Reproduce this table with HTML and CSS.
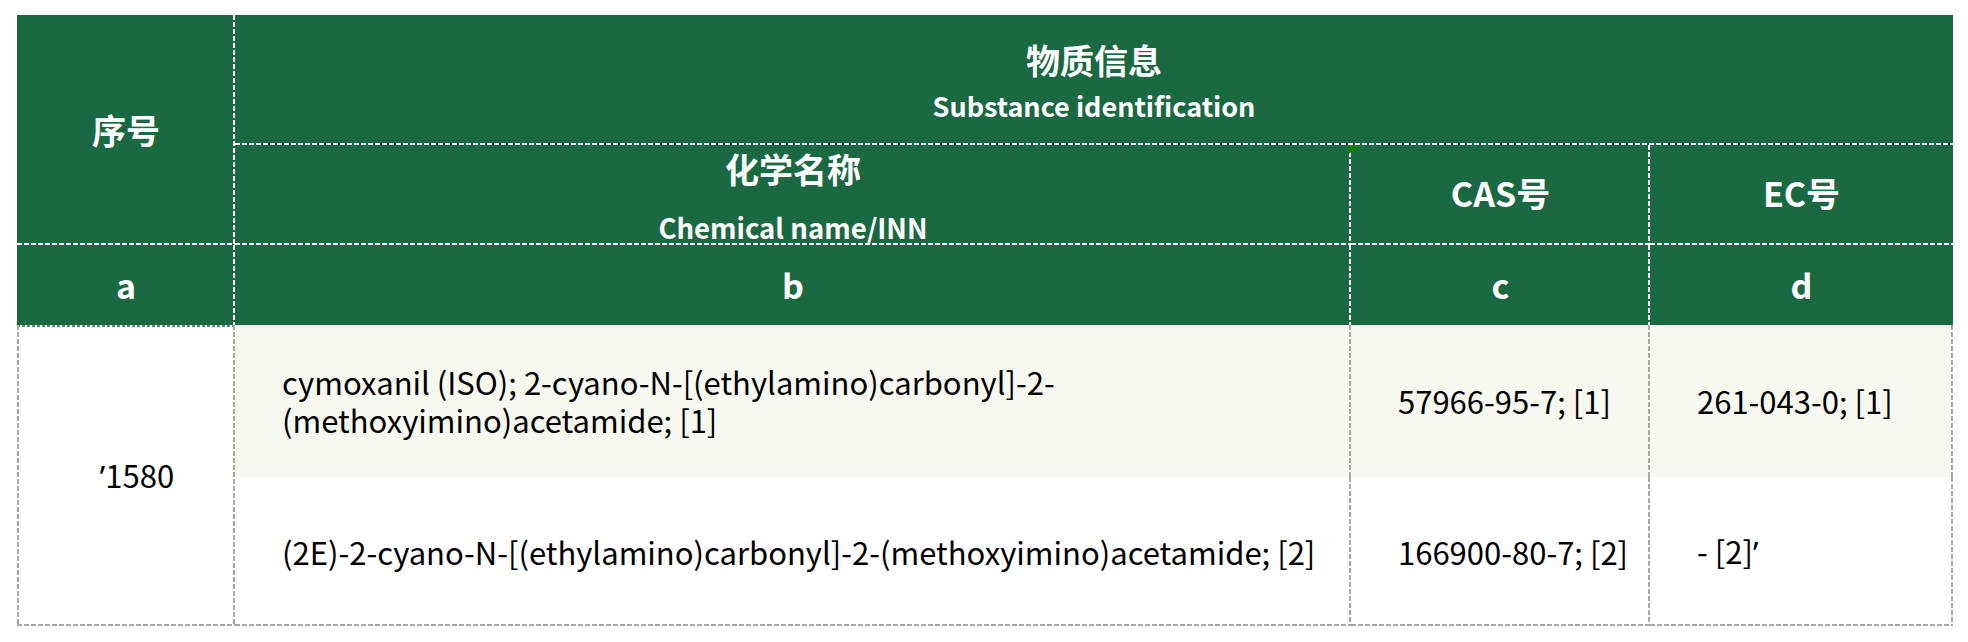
FILE: index.html
```html
<!DOCTYPE html>
<html lang="zh">
<head>
<meta charset="utf-8">
<title>物质信息</title>
<link rel="stylesheet" href="styles.css">
</head>
<body>
<table class="subst">
  <colgroup>
    <col class="col-a"><col class="col-b"><col class="col-c"><col class="col-d">
  </colgroup>
  <thead>
    <tr class="r1">
      <th rowspan="2" class="hd ln-rb big">序号</th>
      <th colspan="3" class="hd ln-b title-cell">
        <div class="zh">物质信息</div>
        <div class="en en-title">Substance identification</div>
      </th>
    </tr>
    <tr class="r2">
      <th class="hd ln-rb name-head">
        <div class="zh">化学名称</div>
        <div class="en en-name">Chemical name/INN</div>
      </th>
      <th class="hd ln-rb big code-head cas-head"><span class="flag"></span>CAS号</th>
      <th class="hd ln-b big code-head">EC号</th>
    </tr>
    <tr class="r3">
      <th class="hd ln-r big">a</th>
      <th class="hd ln-r big">b</th>
      <th class="hd ln-r big">c</th>
      <th class="hd big">d</th>
    </tr>
  </thead>
  <tbody>
    <tr class="r4">
      <td rowspan="2" class="idx g-idx"><span class="q">’</span>1580</td>
      <td class="alt g-r txt">cymoxanil (ISO); 2-cyano-N-[(ethylamino)carbonyl]-2-<br>(methoxyimino)acetamide; [1]</td>
      <td class="alt g-r txt">57966-95-7; [1]</td>
      <td class="alt g-r txt">261-043-0; [1]</td>
    </tr>
    <tr class="r5">
      <td class="g-rb txt">(2E)-2-cyano-N-[(ethylamino)carbonyl]-2-(methoxyimino)acetamide; [2]</td>
      <td class="g-rb txt">166900-80-7; [2]</td>
      <td class="g-rb txt">- [2]<span class="q">’</span></td>
    </tr>
  </tbody>
</table>
</body>
</html>
```

FILE: styles.css
```css
html, body {
  margin: 0;
  padding: 0;
  background: #ffffff;
}

body {
  padding: 15px 0 0 17px;
  font-family: "Noto Sans CJK SC", "Noto Sans", sans-serif;
}

.subst {
  border-collapse: separate;
  border-spacing: 0;
  table-layout: fixed;
  width: 1936px;
}

.col-a { width: 218px; }
.col-b { width: 1116px; }
.col-c { width: 299px; }
.col-d { width: 303px; }

th, td {
  padding: 0;
}

.r1 { height: 130px; }
.r2 { height: 100px; }
.r3 { height: 80px; }
.r4 { height: 152px; }
.r5 { height: 149px; }

/* header */
.hd {
  background-color: #1b6942;
  color: #ffffff;
  font-weight: 700;
  text-align: center;
  vertical-align: middle;
}

.big {
  font-size: 34px;
  line-height: 44px;
}

.code-head {
  padding-bottom: 4px;
}

.zh {
  font-size: 34px;
  line-height: 44px;
}

.en {
  font-size: 28px;
  line-height: 36px;
}

.title-cell {
  vertical-align: top;
  padding-top: 23px;
}

.en-title {
  font-size: 27px;
  margin-top: 6px;
}

.name-head {
  vertical-align: top;
  padding-top: 2px;
}

.en-name {
  font-size: 27.5px;
  margin-top: 18px;
}

/* white dashed header lines */
.ln-b {
  background-image: linear-gradient(90deg, #ffffff 5px, transparent 5px);
  background-size: 7px 2px;
  background-position: left bottom;
  background-repeat: repeat-x;
}

.ln-r {
  background-image: linear-gradient(180deg, #ffffff 5px, transparent 5px);
  background-size: 2px 7px;
  background-position: right top;
  background-repeat: repeat-y;
}

.ln-rb {
  background-image:
    linear-gradient(180deg, #ffffff 5px, transparent 5px),
    linear-gradient(90deg, #ffffff 5px, transparent 5px);
  background-size: 2px 7px, 7px 2px;
  background-position: right top, left bottom;
  background-repeat: repeat-y, repeat-x;
}

.cas-head {
  position: relative;
}

.flag {
  position: absolute;
  left: -2px;
  top: 0;
  width: 11px;
  height: 9px;
  background: #008000;
  clip-path: polygon(0 0, 100% 0, 0 100%);
}

/* body */
.txt {
  font-size: 31px;
  line-height: 38px;
  color: #000000;
  text-align: left;
  vertical-align: middle;
  padding-left: 47px;
}

.idx {
  font-size: 31px;
  line-height: 38px;
  color: #000000;
  text-align: center;
  vertical-align: middle;
  padding-left: 22px;
  background-color: #ffffff;
}

.q {
  font-family: "Noto Sans", "Open Sans", sans-serif;
}

.alt {
  background-color: #f7f8ef;
}

.g-r {
  background-image: linear-gradient(180deg, #a9a9a9 5px, transparent 5px);
  background-size: 2px 7px;
  background-position: right top;
  background-repeat: repeat-y;
}

.g-rb {
  background-image:
    linear-gradient(180deg, #a9a9a9 5px, transparent 5px),
    linear-gradient(90deg, #a9a9a9 5px, transparent 5px);
  background-size: 2px 7px, 7px 2px;
  background-position: right top, left bottom;
  background-repeat: repeat-y, repeat-x;
}

.g-idx {
  background-image:
    linear-gradient(180deg, #a9a9a9 5px, transparent 5px),
    linear-gradient(180deg, #a9a9a9 5px, transparent 5px),
    linear-gradient(90deg, #a9a9a9 5px, transparent 5px),
    linear-gradient(90deg, #5e8f76 3px, transparent 3px);
  background-size: 2px 7px, 2px 7px, 7px 2px, 5px 2px;
  background-position: right top, left top, left bottom, left top;
  background-repeat: repeat-y, repeat-y, repeat-x, repeat-x;
}
```
